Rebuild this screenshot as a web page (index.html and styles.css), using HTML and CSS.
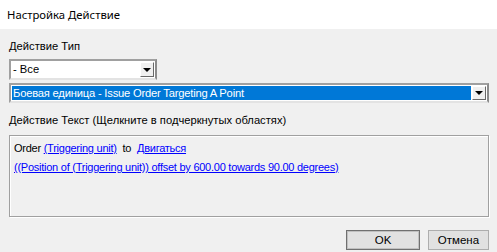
FILE: index.html
```html
<!DOCTYPE html>
<html lang="ru">
<head>
    <meta charset="UTF-8">
    <title>Настройка Действие</title>
    <link rel="stylesheet" href="styles.css">
</head>
<body>
    <div class="titlebar">Настройка Действие</div>

    <div class="content">
        <div class="label first">Действие Тип</div>

        <div class="combo small">
            <div class="value">- Все</div>
            <div class="arrow"><span></span></div>
        </div>

        <div class="combo wide">
            <div class="value selected">Боевая единица - Issue Order Targeting A Point</div>
            <div class="arrow"><span></span></div>
        </div>

        <div class="label second">Действие Текст (Щелкните в подчеркнутых областях)</div>

        <div class="textbox">
            <div class="line">Order <a href="#">(Triggering unit)</a> to <a href="#">Двигаться</a></div>
            <div class="line"><a href="#">((Position of (Triggering unit)) offset by 600.00 towards 90.00 degrees)</a></div>
        </div>

        <div class="actions">
            <button class="btn default">OK</button>
            <button class="btn">Отмена</button>
        </div>
    </div>
</body>
</html>
```

FILE: styles.css
```css
/* Диалог */
body {
    margin: 0;
    background: #f0f0f0;
    font-family: "Liberation Sans", Arial, sans-serif;
    font-size: 11px;
    color: #000;
}

.titlebar {
    height: 29px;
    line-height: 29px;
    padding-left: 7px;
    background: #fff;
    font-family: "Noto Sans", sans-serif;
    font-size: 11.3px;
}

.content {
    padding: 0 8px 0 9px;
}

.label {
    height: 14px;
    line-height: 14px;
    font-size: 11.2px;
}

.label.first {
    margin-top: 10px;
    margin-bottom: 6px;
}

.label.second {
    margin-top: 10px;
    margin-bottom: 8px;
}

/* Выпадающие списки */
.combo {
    display: flex;
    box-sizing: border-box;
    height: 21px;
    border: 2px solid #a0a0a0;
    border-right-color: #8c8c8c;
    border-bottom-color: #e3e3e3;
    background: #fff;
    padding: 1px;
}

.combo.small {
    width: 148px;
}

.combo.wide {
    margin-top: 3px;
    height: 20px;
}

.value {
    flex: 1;
    line-height: 15px;
    padding-left: 1px;
    font-size: 11.2px;
}

.value.selected {
    background: #0078d7;
    color: #fff;
    letter-spacing: -0.2px;
}

.arrow {
    width: 14px;
    margin-left: 1px;
    box-sizing: border-box;
    background: #f0f0f0;
    border: 1px solid;
    border-color: #fff #696969 #696969 #fff;
    display: flex;
    align-items: center;
    justify-content: center;
}

.arrow span {
    width: 0;
    height: 0;
    border-left: 4px solid transparent;
    border-right: 4px solid transparent;
    border-top: 4px solid #000;
}

/* Текст действия */
.textbox {
    box-sizing: border-box;
    height: 82px;
    border: 1px solid #a0a0a0;
    box-shadow: inset 1px 1px 0 #fff, 1px 1px 0 #fff;
    padding: 4px 4px;
    font-size: 11px;
    letter-spacing: -0.25px;
}

.line {
    height: 19px;
    line-height: 17px;
}

.textbox a {
    color: #0000ff;
    margin-left: 3px;
    margin-right: 3px;
}

.line a:first-child {
    margin-left: 0;
}

/* Кнопки */
.actions {
    display: flex;
    justify-content: flex-end;
    gap: 8px;
    margin-top: 13px;
}

.btn {
    box-sizing: border-box;
    height: 20px;
    background: #e1e1e1;
    border: 1px solid #adadad;
    font-family: "Liberation Sans", Arial, sans-serif;
    font-size: 11.5px;
    padding: 0;
}

.btn.default {
    width: 74px;
    border: 1px solid #707070;
    box-shadow: inset 0 0 0 1px #c0c0c0;
}

.btn:not(.default) {
    width: 61px;
}
```
